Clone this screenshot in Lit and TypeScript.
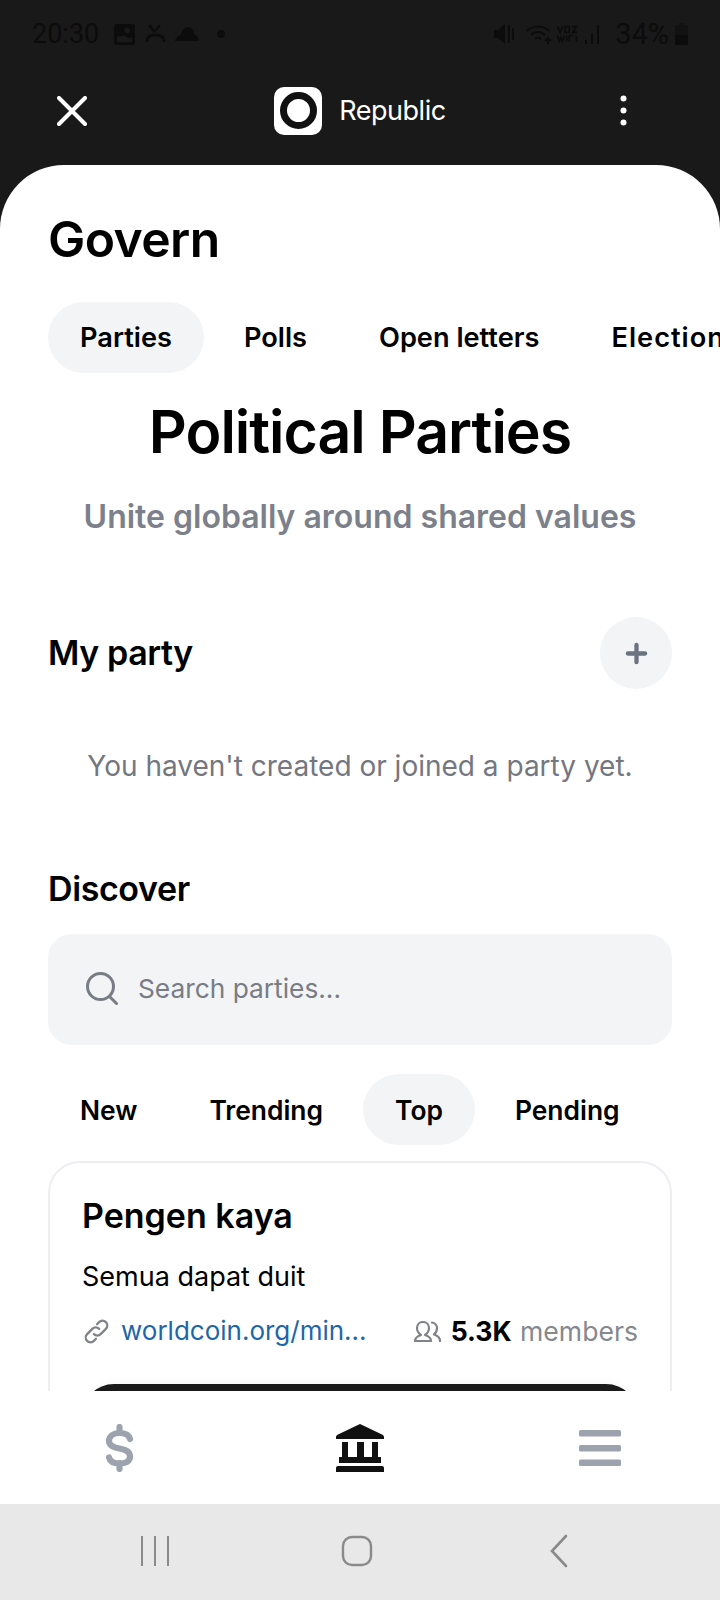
import { LitElement, html, css } from "lit";
import { customElement } from "lit/decorators.js";

@customElement("app-root")
export class AppRoot extends LitElement {
  static styles = css`
    :host { display: block; width: 720px; height: 1600px; overflow: hidden; background: #191919; font-family: Inter, "Noto Sans", sans-serif; color: #000; }
    * { box-sizing: border-box; }
    .page { height: 1600px; display: flex; flex-direction: column; }
    .status { height: 68px; flex: none; padding: 0 32px; display: flex; align-items: center; color: #0c0c0c; background: #191919; font-family: Roboto, sans-serif; font-size: 27px; }
    .status .left, .status .right { display: flex; align-items: center; }
    .status .right { margin-left: auto; font-size: 29px; }
    .status svg { display: block; }
    .m1 { margin-left: 15px; } .m2 { margin-left: 10px; } .m3 { margin-left: 9px; } .m4 { margin-left: 18px; }
    .r1 { margin-left: 12px; } .r2 { margin-left: 3px; } .r3 { margin-left: 6px; } .r4 { margin-left: 14px; } .r5 { margin-left: 6px; }
    .top { height: 97px; padding-bottom: 12px; flex: none; display: grid; grid-template-columns: 1fr auto 1fr; align-items: center; color: #fff; }
    .top .close { justify-self: start; display: block; margin-left: 57px; }
    .top .menu { justify-self: end; display: block; margin-right: 93px; }
    .brand { display: flex; align-items: center; gap: 17px; font-size: 27px; letter-spacing: -0.5px; }
    .logo { width: 48px; height: 48px; background: #fff; border-radius: 10px; display: flex; align-items: center; justify-content: center; }
    .logo i { width: 37px; height: 37px; border: 7px solid #111; border-radius: 50%; background: #fff; display: block; }
    .sheet { flex: 1; min-height: 0; background: #fff; border-radius: 64px 64px 0 0; overflow: hidden; padding: 0 48px; }
    h1 { font-size: 49.8px; line-height: 56px; font-weight: 600; margin: 46px 0 0; letter-spacing: -0.6px; }
    .tabs { display: flex; margin-top: 35px; white-space: nowrap; font-size: 27.2px; font-weight: 600; }
    .tab { height: 71px; display: flex; align-items: center; padding: 0 32px; border-radius: 36px; flex: none; }
    .tab.on { background: #f3f4f6; }
    .tab.g { padding-left: 40px; }
    .tab.t { margin-left: 8px; }
    .tab.e { letter-spacing: 1px; }
    h2 { text-align: center; font-size: 59px; line-height: 64px; font-weight: 600; margin: 27px 0 0; letter-spacing: -1px; }
    .sub { text-align: center; font-size: 32px; line-height: 40px; font-weight: 600; color: #7b808b; margin-top: 33px; }
    .row { display: flex; align-items: center; justify-content: space-between; margin-top: 80px; }
    h3 { margin: 0; font-size: 34px; line-height: 40px; font-weight: 600; letter-spacing: -0.4px; }
    .plus { width: 72px; height: 72px; border-radius: 50%; background: #f3f4f6; display: flex; align-items: center; justify-content: center; }
    .empty { text-align: center; font-size: 28px; line-height: 36px; color: #74777f; margin-top: 59px; }
    .disc { margin-top: 85px; }
    .search { height: 111px; margin-top: 25px; background: #f3f4f6; border-radius: 24px; display: flex; align-items: center; gap: 20px; padding: 0 38px 2px; color: #787c85; font-size: 26.3px; }
    .filters { margin-top: 29px; font-size: 26.4px; }
    .card { margin-top: 16px; border: 2px solid #eceef1; border-radius: 32px; padding: 33px 32px 32px; height: 500px; }
    .card h4 { margin: 0; font-size: 34px; line-height: 40px; font-weight: 600; }
    .desc { font-size: 27px; line-height: 36px; margin-top: 23px; }
    .meta { display: flex; align-items: center; justify-content: space-between; margin-top: 18px; font-size: 26px; line-height: 36px; white-space: nowrap; }
    .link { display: flex; align-items: center; gap: 12px; color: #1e66a8; margin-left: 2px; }
    .mem { display: flex; align-items: center; gap: 9px; color: #85888e; font-size: 26.6px; }
    .mem b { color: #000; font-weight: 700; margin-right: 1px; }
    .meta svg { display: block; }
    .cta { height: 90px; margin-top: 35px; background: #191919; border-radius: 32px; box-shadow: 0 2px 12px rgba(0, 0, 0, 0.08); }
    .nav { height: 113px; flex: none; background: #fff; display: grid; grid-template-columns: repeat(3, 1fr); align-items: start; padding: 33px 0 0; position: relative; }
    .nav svg { display: block; }
    .nav div { display: flex; }
    .nav div:nth-child(1) { padding-left: 105px; }
    .nav div:nth-child(2) { justify-content: center; }
    .nav div:nth-child(3) { justify-content: flex-end; padding-right: 99px; padding-top: 6px; }
    .sys { height: 96px; flex: none; background: #e8e8e8; display: grid; grid-template-columns: repeat(3, 1fr); align-items: center; padding-bottom: 3px; }
    .sys svg { display: block; }
    .sys div { display: flex; }
    .sys div:nth-child(1) { padding-left: 139px; }
    .sys div:nth-child(2) { justify-content: center; padding-right: 6px; }
    .sys div:nth-child(3) { justify-content: flex-end; padding-right: 151px; }
  `;

  render() {
    return html`<div class="page">
      <div class="status">
        <div class="left">
          <span>20:30</span>
          <svg class="m1" width="21" height="21" viewBox="0 0 22 22" fill="#0c0c0c"><path d="M3 0h16a3 3 0 0 1 3 3v16a3 3 0 0 1-3 3H3a3 3 0 0 1-3-3V3a3 3 0 0 1 3-3zm0 13v6h16v-5l-4 1-4-3zM14 4a3 3 0 1 0 .01 0z" fill-rule="evenodd"/></svg>
          <svg class="m2" width="21" height="22" viewBox="0 0 24 22" fill="none" stroke="#0c0c0c" stroke-width="3"><path d="M5 1l6 8M17 1l-5 6M2 20c0-6 4-8 10-8s10 2 10 8"/></svg>
          <svg class="m3" width="24" height="14" viewBox="0 0 26 15" fill="#0c0c0c"><path d="M0 15c1-4 3-6 6-6 1-5 4-9 8-9s6 4 7 8c3 1 4 4 5 7z"/></svg>
          <svg class="m4" width="8" height="8" viewBox="0 0 8 8" fill="#0c0c0c"><circle cx="4" cy="4" r="4"/></svg>
        </div>
        <div class="right">
          <svg width="20" height="22" viewBox="0 0 20 22" fill="#0c0c0c"><path d="M0 7h4l7-6v20l-7-6H0zM14 2h2v18h-2zM18 5h2v12h-2z"/></svg>
          <svg class="r1" width="27" height="22" viewBox="0 0 27 22" fill="none" stroke="#0c0c0c" stroke-width="2"><path d="M1 8c6-6 16-6 22 0M5 12c4-4 10-4 14 0M9 16c2-2 4-2 6 0"/><path d="M22 15v6M19 18l3-3 3 3"/></svg>
          <svg class="r2" width="23" height="22" viewBox="0 0 28 22" fill="none" stroke="#0c0c0c" stroke-width="2"><path d="M2 2l3 7 3-7M11 2h5v7h-5zM19 2h6l-5 7h6M2 13l2 7 2-5 2 5 2-7M13 13v7M16 13h5M16 13v7M25 13v7"/></svg>
          <svg class="r3" width="16" height="22" viewBox="0 0 16 22" fill="#0c0c0c"><path d="M0 17h2v4H0zM6 10h2v11H6zM12 2h2v19h-2z"/></svg>
          <span class="r4">34%</span>
          <svg class="r5" width="13" height="22" viewBox="0 0 13 22" fill="#0c0c0c"><path d="M4 0h5v2h4v20H0V2h4z" fill-opacity=".5"/><path d="M0 12h13v10H0z"/></svg>
        </div>
      </div>
      <div class="top">
        <svg class="close" width="30" height="30" viewBox="0 0 30 30" fill="none" stroke="#fff" stroke-width="4" stroke-linecap="round"><path d="M2 2l26 26M28 2L2 28"/></svg>
        <div class="brand"><span class="logo"><i></i></span><span>Republic</span></div>
        <svg class="menu" width="7" height="31" viewBox="0 0 7 31" fill="#fff"><circle cx="3.5" cy="3.5" r="3"/><circle cx="3.5" cy="15.5" r="3"/><circle cx="3.5" cy="27.5" r="3"/></svg>
      </div>
      <div class="sheet">
        <h1>Govern</h1>
        <div class="tabs">
          <div class="tab on">Parties</div><div class="tab g">Polls</div><div class="tab g">Open letters</div><div class="tab g e">Elections</div>
        </div>
        <h2>Political Parties</h2>
        <div class="sub">Unite globally around shared values</div>
        <div class="row">
          <h3>My party</h3>
          <div class="plus"><svg width="23" height="23" viewBox="0 0 24 24" fill="none" stroke="#6b7280" stroke-width="4.5" stroke-linecap="round"><path d="M12 3v18M3 12h18"/></svg></div>
        </div>
        <div class="empty">You haven't created or joined a party yet.</div>
        <h3 class="disc">Discover</h3>
        <div class="search">
          <svg width="32" height="33" viewBox="0 0 32 33" fill="none" stroke="#787c85" stroke-width="3" stroke-linecap="round"><circle cx="14.5" cy="14.5" r="13"/><path d="M24 25l6.500 6.500"/></svg>
          <span>Search parties...</span>
        </div>
        <div class="tabs filters">
          <div class="tab">New</div><div class="tab g">Trending</div><div class="tab on t">Top</div><div class="tab g">Pending</div>
        </div>
        <div class="card">
          <h4>Pengen kaya</h4>
          <div class="desc">Semua dapat duit</div>
          <div class="meta">
            <div class="link">
              <svg width="25" height="25" viewBox="0 0 24 24" fill="none" stroke="#808389" stroke-width="2.2" stroke-linecap="round" stroke-linejoin="round"><path d="M9.500 14.500a4.500 4.500 0 0 0 6.500 0l5-5a4.500 4.500 0 0 0-6.500-6.500l-2 2"/><path d="M14.500 9.500a4.500 4.500 0 0 0-6.500 0l-5 5a4.500 4.500 0 0 0 6.500 6.500l2-2"/></svg>
              <span>worldcoin.org/min...</span>
            </div>
            <div class="mem">
              <svg width="29" height="21" viewBox="0 0 29 21" fill="none" stroke="#808389" stroke-width="2.2" stroke-linecap="round" stroke-linejoin="round"><path d="M2 20c0-3 3-5 6-6-3-2-4-4-4-7 0-3.500 2.500-6 6-6s6 2.500 6 6c0 3-1 5-4 7 3 1 6 3 6 6z"/><path d="M19 1.500c3 .5 5 3 5 5.500 0 3-1 5-3 6.500 3 1 6 3.500 6 6.500"/></svg>
              <span><b>5.3K</b> members</span>
            </div>
          </div>
          <div class="cta"></div>
        </div>
      </div>
      <div class="nav">
        <div><svg width="29" height="48" viewBox="0 0 29 48" fill="none" stroke="#9ca3af" stroke-width="6.200" stroke-linecap="round" stroke-linejoin="round"><path d="M14.500 3v6M14.500 39v6M25 15c-1-4-5-6-10.500-6-6 0-10.500 3-10.500 8 0 5 5 6.500 10.500 7.500 6 1 10.500 3 10.500 8 0 5-4.500 7-10.500 7-5.500 0-9.500-2-10.500-6"/></svg></div>
        <div><svg width="48" height="48" viewBox="0 0 48 48" fill="#111"><path d="M24 0l22 10.500c1.300.7 2 1.500 2 2.500v2H0v-2c0-1 .7-1.800 2-2.500zM6 18h6v15H6zM21 18h7v15h-7zM36 18h6v15h-6zM3 33h42v6H3zM2 42h44a2 2 0 0 1 2 2v4H0v-4a2 2 0 0 1 2-2z"/></svg></div>
        <div><svg width="42" height="36" viewBox="0 0 42 36" fill="#9ca3af"><rect width="42" height="6.500" rx="1.500"/><rect y="15" width="42" height="6.500" rx="1.500"/><rect y="29.500" width="42" height="6.500" rx="1.500"/></svg></div>
      </div>
      <div class="sys">
        <div><svg width="30" height="32" viewBox="0 0 30 32" fill="none" stroke="#8a8a8a" stroke-width="2"><path d="M3 1v30M16 1v30M29 1v30"/></svg></div>
        <div><svg width="32" height="32" viewBox="0 0 32 32" fill="none" stroke="#8a8a8a" stroke-width="2.400"><rect x="2" y="2" width="28" height="28" rx="9"/></svg></div>
        <div><svg width="20" height="34" viewBox="0 0 20 34" fill="none" stroke="#8a8a8a" stroke-width="2.600" stroke-linecap="round"><path d="M17 2L3 17l14 15"/></svg></div>
      </div>
    </div>`;
  }
}
